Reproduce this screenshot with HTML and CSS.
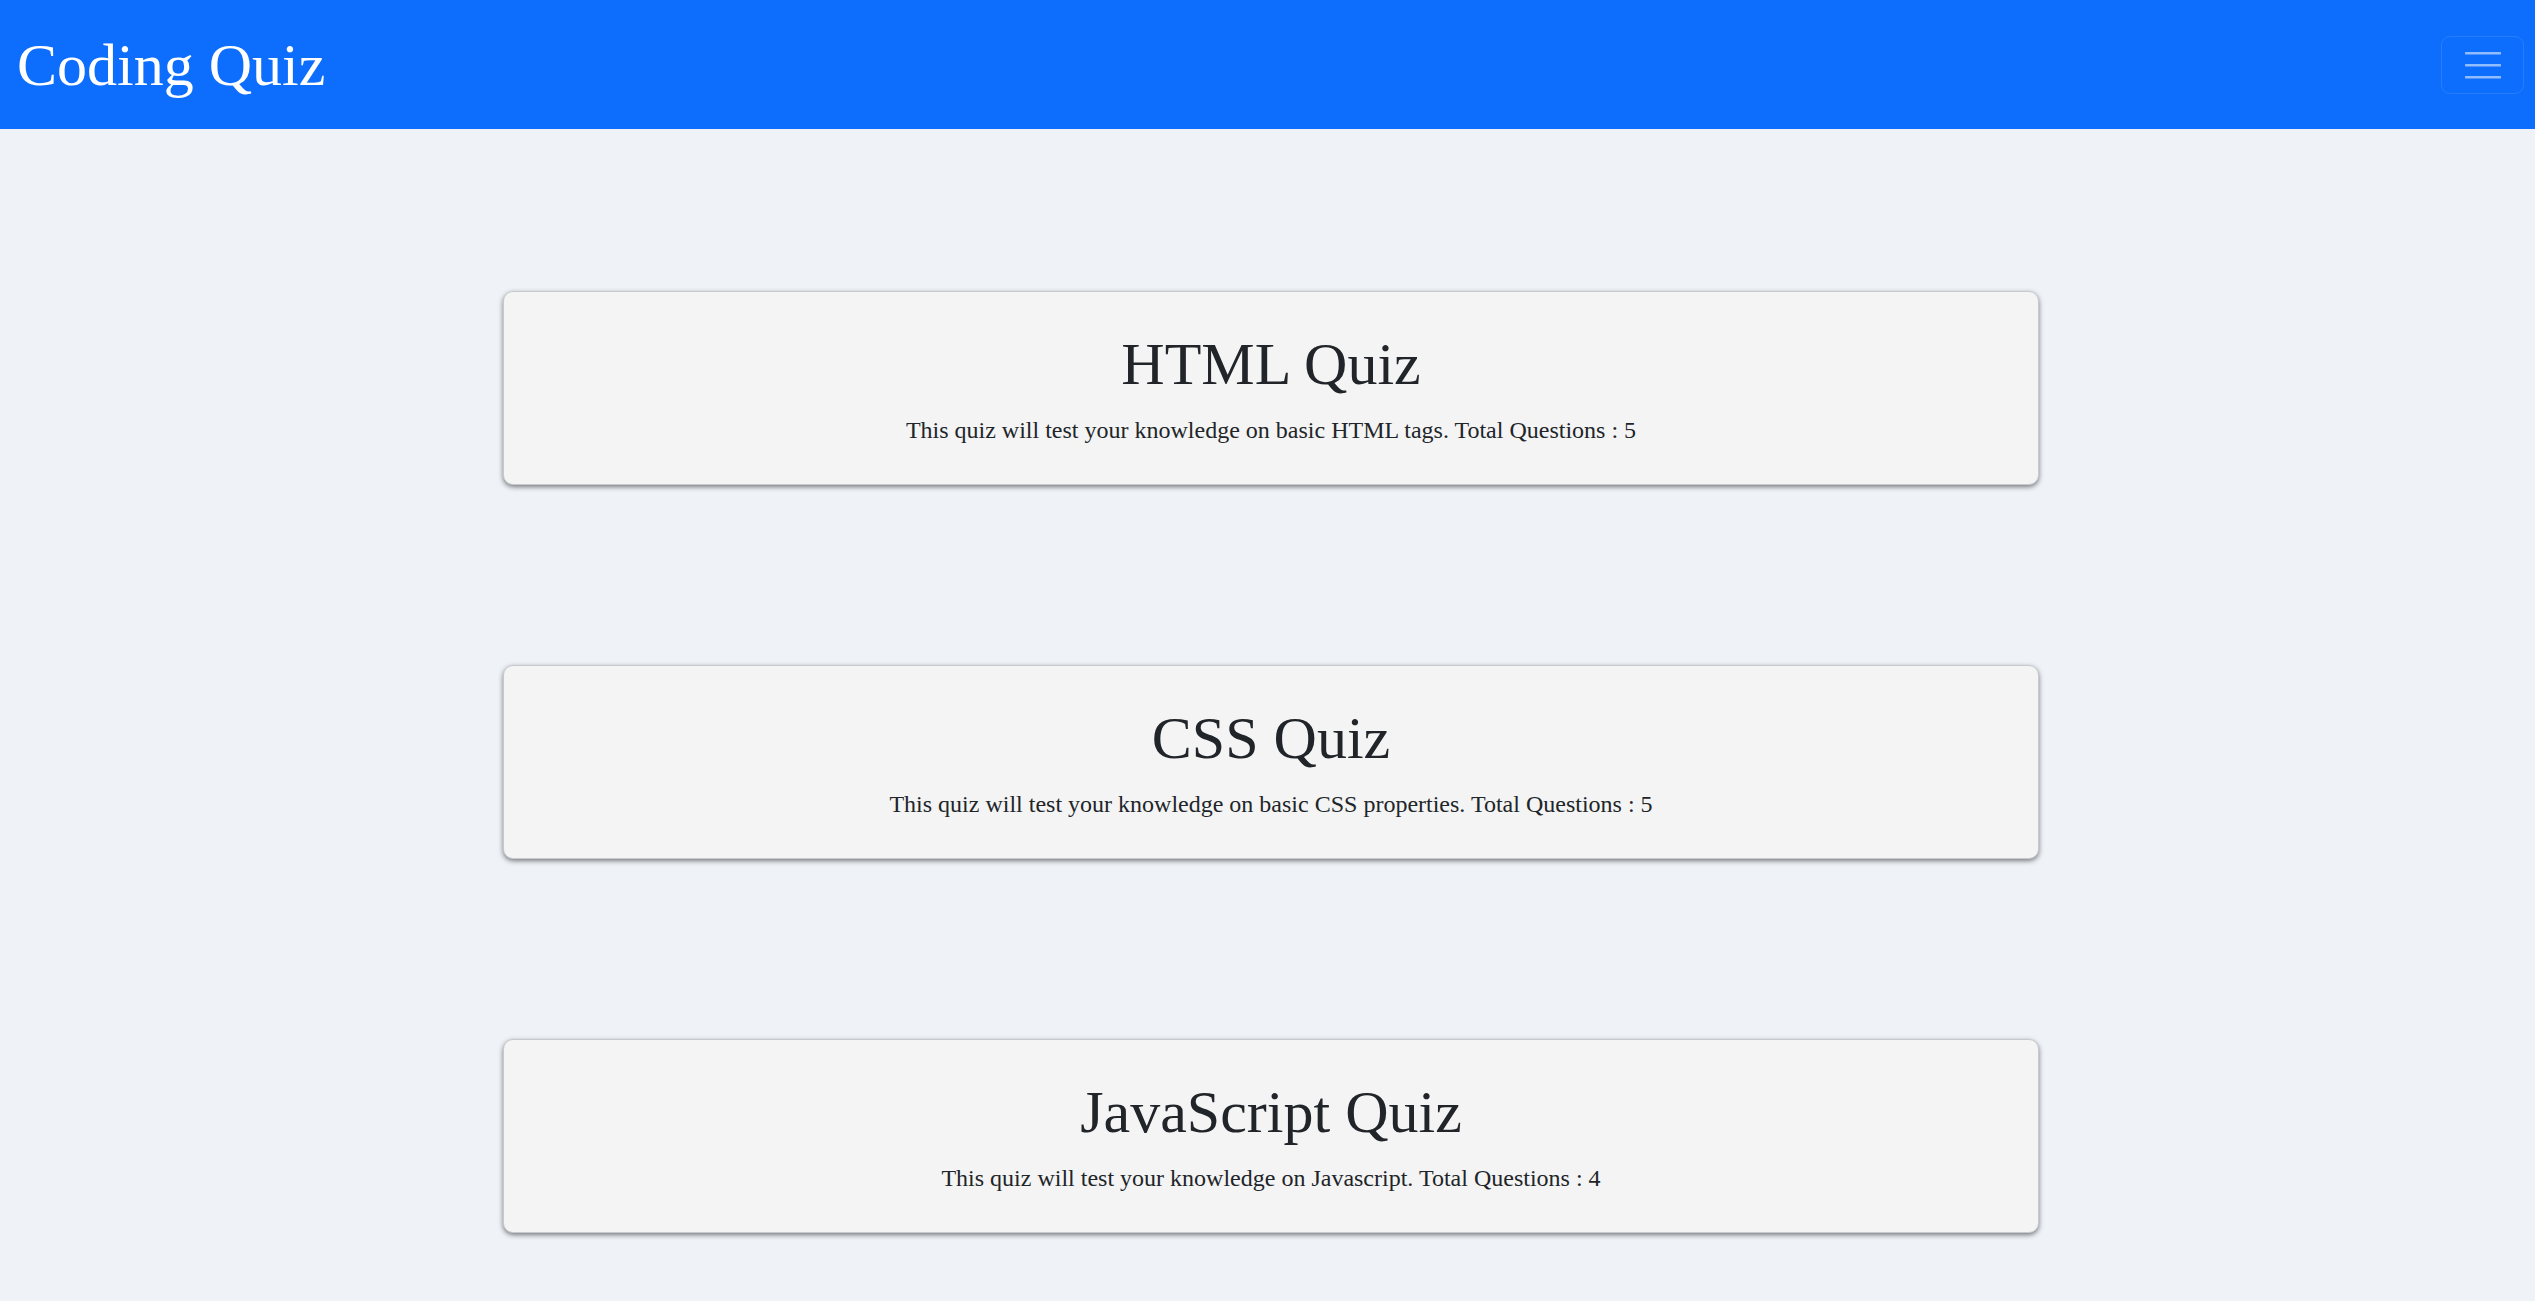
FILE: index.html
```html
<!DOCTYPE html>
<html>
<head>
<meta charset="utf-8">
<title>Coding Quiz</title>
<link rel="stylesheet" href="styles.css">
</head>
<body>
<nav class="navbar">
  <a class="brand" href="#">Coding Quiz</a>
  <button class="toggler" type="button" aria-label="Toggle navigation">
    <svg width="36" height="28" viewBox="0 0 36 28"><path d="M1 4.3h34M1 16.3h34M1 28.3h34" stroke="rgba(255,255,255,0.55)" stroke-width="2.6" stroke-linecap="round" transform="translate(0,-2)"/></svg>
  </button>
</nav>
<main class="quiz-list">
  <div class="card">
    <h1 class="card-title">HTML Quiz</h1>
    <p class="card-text">This quiz will test your knowledge on basic HTML tags. Total Questions : 5</p>
  </div>
  <div class="card">
    <h1 class="card-title">CSS Quiz</h1>
    <p class="card-text">This quiz will test your knowledge on basic CSS properties. Total Questions : 5</p>
  </div>
  <div class="card">
    <h1 class="card-title">JavaScript Quiz</h1>
    <p class="card-text">This quiz will test your knowledge on Javascript. Total Questions : 4</p>
  </div>
</main>
</body>
</html>
```
FILE: styles.css
```css
* { box-sizing: border-box; }
html, body { margin: 0; padding: 0; }
body {
  background: #eff3f8;
  font-family: "Liberation Serif", "Times New Roman", serif;
  color: #212529;
  height: 1301px;
  overflow: hidden;
}
.navbar {
  height: 129px;
  background: #0d6efd;
  display: flex;
  align-items: center;
  justify-content: space-between;
  padding: 0 11px 0 17px;
}
.brand {
  color: #fff;
  text-decoration: none;
  font-size: 60px;
  line-height: 72px;
}
.toggler {
  width: 83px;
  height: 58px;
  background: transparent;
  border: 1px solid rgba(255,255,255,0.1);
  border-radius: 9px;
  display: flex;
  align-items: center;
  justify-content: center;
  padding: 0;
}
.toggler svg { display: block; }
.quiz-list {
  display: flex;
  flex-direction: column;
  align-items: center;
  gap: 180px;
  padding: 162px 0 0 7px;
}
.card {
  width: 1536px;
  height: 194px;
  background: #f4f4f4;
  border: 1px solid #c6cacf;
  border-radius: 10px;
  box-shadow: 0 2px 5px rgba(0,0,0,0.5);
  text-align: center;
  padding: 36px 24px 0;
}
.card-title {
  font-size: 60px;
  font-weight: 400;
  line-height: 72px;
  margin: 0 0 12px;
}
.card-text {
  font-size: 24px;
  line-height: 36px;
  margin: 0;
}
```
